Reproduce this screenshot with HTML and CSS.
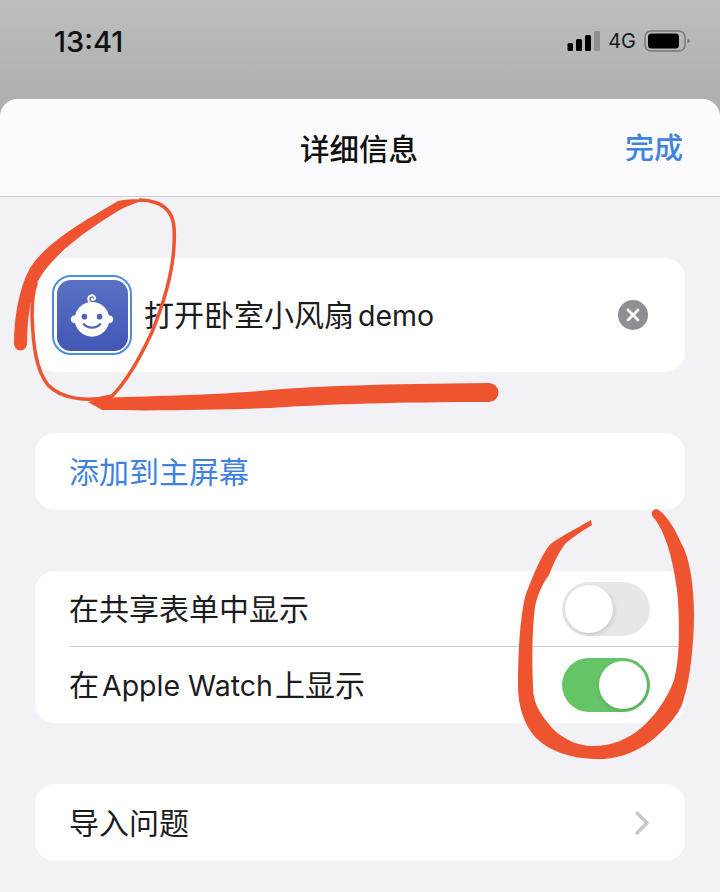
FILE: index.html
```html
<!DOCTYPE html>
<html lang="zh-CN">
<head>
  <meta charset="UTF-8" />
  <title>详细信息</title>
  <link rel="stylesheet" href="styles.css">
</head>
<body>
  <!-- Status bar -->
  <div class="status-bar">
    <span class="time">13:41</span>
    <div class="status-icons">
      <svg class="signal" width="33" height="20" viewBox="0 0 33 20">
        <rect x="0.500" y="12" width="5.500" height="8" rx="1.500" fill="#000"/>
        <rect x="9" y="8" width="6" height="12" rx="1.500" fill="#000"/>
        <rect x="18" y="4" width="6" height="16" rx="1.500" fill="#000"/>
        <rect x="27" y="0" width="6" height="20" rx="1" fill="#8f9092"/>
      </svg>
      <span class="network">4G</span>
      <svg class="battery" width="47" height="22" viewBox="0 0 47 22">
        <rect x="1" y="1" width="40" height="20" rx="6" fill="none" stroke="#77787a" stroke-width="1.500"/>
        <rect x="4" y="3.500" width="31" height="15" rx="3.500" fill="#000"/>
        <path d="M43.500 8.500l2.500 2.500-2.500 2.500z" fill="#66676a"/>
      </svg>
    </div>
  </div>

  <div class="sheet">
    <div class="sheet-header">
      <span class="sheet-title">详细信息</span>
      <span class="done">完成</span>
    </div>

    <div class="sheet-body">
      <!-- Name -->
      <div class="card name-card">
        <div class="app-icon">
          <div class="app-icon-inner">
            <svg width="52" height="52" viewBox="0 0 48 48">
              <circle cx="24" cy="28" r="16" fill="#fff"/>
              <circle cx="8" cy="28" r="3.500" fill="#fff"/>
              <circle cx="40" cy="28" r="3.500" fill="#fff"/>
              <path d="M23 13c-3-1.500-3.500-6 0-7 3-.8 5 2.500 2.800 4-1.200.7-2.400-.3-1.800-1.300" fill="none" stroke="#fff" stroke-width="1.800" stroke-linecap="round"/>
              <circle cx="17" cy="25.500" r="2.600" fill="#4f64bc"/>
              <circle cx="31" cy="25.500" r="2.600" fill="#4f64bc"/>
              <path d="M16.500 32.500c4 4.200 11 4.200 15 0" fill="none" stroke="#4f64bc" stroke-width="2.200" stroke-linecap="round"/>
            </svg>
          </div>
        </div>
        <span class="name-text label">打开卧室小风扇<span class="latin">demo</span></span>
        <svg class="clear" width="30" height="30" viewBox="0 0 30 30">
          <circle cx="15" cy="15" r="15" fill="#8e8e93"/>
          <path d="M10 10l10 10M20 10l-10 10" stroke="#fff" stroke-width="2.800" stroke-linecap="round"/>
        </svg>
      </div>

      <!-- Home screen -->
      <div class="card row row-single">
        <span class="label link">添加到主屏幕</span>
      </div>

      <!-- Toggles -->
      <div class="card">
        <div class="row row-split">
          <span class="label">在共享表单中显示</span>
          <span class="toggle"><span class="knob"></span></span>
        </div>
        <div class="row">
          <span class="label">在<span class="latin">Apple Watch</span>上显示</span>
          <span class="toggle toggle-on"><span class="knob"></span></span>
        </div>
      </div>

      <!-- Import -->
      <div class="card row row-single">
        <span class="label">导入问题</span>
        <svg class="chevron" width="14" height="24" viewBox="0 0 14 24">
          <path d="M2 2l10 10L2 22" fill="none" stroke="#c7c7cc" stroke-width="3.500" stroke-linecap="round" stroke-linejoin="round"/>
        </svg>
      </div>
    </div>
  </div>

  <!-- Red pen marks drawn over the screenshot -->
  <svg class="scribbles" width="720" height="892" viewBox="0 0 720 892">
    <g fill="#ee5430">
      <path d="M14 344C14 320 18 290 30 268C48 240 90 218 118 201C128 199 135 199 145 200C135 203 125 207 118 211C90 228 50 255 36 285C30 300 27 320 27 344A6.500 6.500 0 0 1 14 344Z"/>
      <path d="M88 402L100 398C150 396 220 395 270 390C320 386 380 384 489 383A9.500 9.500 0 0 1 489 402C400 402 330 404 270 408C220 410 150 411 102 410Z"/>
      <path d="M591 520C575 529 562 536 552 543C544 549 533 575 525 597C520 620 518 650 518 687C518 705 524 726 536 738C549 751 570 758 593 759C610 760 631 756 651 741C666 729 681 713 684 698C691 676 694 640 694 613C694 585 689 555 681 543C676 530 666 514 657 509C651 509 651 515 653 517C662 527 672 550 677 590C680 620 680 660 674 680C667 700 653 718 641 728C628 739 612 746 593 746C576 746 562 738 552 728C542 716 533 705 533 687C532 660 532 630 535 607C538 592 544 582 549 575C554 562 560 550 566 543C573 537 582 531 592 525Z"/>
    </g>
    <path d="M140 200C150 200 162 203 168 211C174 218 175 228 174 245C173 270 165 300 152 332C140 358 126 382 112 396C90 402 62 400 48 385C36 370 33 345 32 315C32 302 33 292 36 284" fill="none" stroke="#ee5430" stroke-width="3.500" stroke-linecap="round"/>
  </svg>
</body>
</html>
```

FILE: styles.css
```css
:root {
  --page-bg: #f1f1f6;
  --ios-blue: #3f82e0;
  --text-color: #1c1c1e;
  --card-radius: 20px;
  --ui-font: Inter, "Noto Sans CJK SC", sans-serif;
}

html, body {
  height: 100%;
}

body {
  margin: 0;
  height: 892px;
  overflow: hidden;
  position: relative;
  font-family: var(--ui-font);
  color: var(--text-color);
  background: linear-gradient(#bdbec0, #aeafaf 99px);
}

.status-bar {
  height: 99px;
  box-sizing: border-box;
  padding: 25px 29px 0 54px;
  display: flex;
  justify-content: space-between;
  align-items: flex-start;
}

.time {
  font-size: 29px;
  line-height: 34px;
  font-weight: 500;
  color: #111;
}

.status-icons {
  display: flex;
  align-items: center;
  height: 34px;
  margin-top: -1px;
}

.signal {
  margin-right: 8px;
}

.network {
  font-size: 20px;
  color: #1a1a1a;
  margin-right: 8px;
}

.sheet {
  height: 793px;
  background: var(--page-bg);
  border-radius: 18px 18px 0 0;
  overflow: hidden;
}

.sheet-header {
  height: 97px;
  background: #fbfbfd;
  border-bottom: 1px solid #cfcfd3;
  display: flex;
  align-items: center;
  justify-content: center;
  position: relative;
}

.sheet-title {
  font-size: 29.500px;
  font-weight: 500;
  color: #111;
  padding: 0 2px 2px 0;
}

.done {
  position: absolute;
  right: 37px;
  top: 30px;
  font-size: 29px;
  line-height: 40px;
  font-weight: 500;
  color: var(--ios-blue);
}

.sheet-body {
  padding: 61px 35px 0;
  display: flex;
  flex-direction: column;
  gap: 61px;
}

.card {
  background: #fff;
  border-radius: var(--card-radius);
}

.row {
  height: 76px;
  box-sizing: border-box;
  padding: 0 35px 0 34px;
  display: flex;
  align-items: center;
  justify-content: space-between;
  font-size: 30px;
}

.row-single {
  height: 77px;
}

.row-split {
  position: relative;
}

.row-split::after {
  content: "";
  position: absolute;
  left: 35px;
  right: 0;
  bottom: 0;
  height: 1px;
  background: #cdcdd0;
}

.label {
  padding-bottom: 4px;
}

.latin {
  font-size: 28.500px;
  margin: 0 2px 0 3px;
}

.link {
  color: var(--ios-blue);
}

.name-card {
  height: 114px;
  box-sizing: border-box;
  padding: 0 37px 0 17px;
  display: flex;
  align-items: center;
}

.app-icon {
  width: 80px;
  height: 80px;
  box-sizing: border-box;
  border: 2.500px solid #4a8ee0;
  border-radius: 19px;
  padding: 2.500px;
  flex-shrink: 0;
}

.app-icon-inner {
  height: 100%;
  border-radius: 14px;
  background: linear-gradient(#5a70c4, #4257b5);
  display: flex;
  align-items: center;
  justify-content: center;
}

.name-text {
  margin-left: 12px;
  font-size: 30px;
  flex: 1;
}

.name-text .latin {
  margin: 0 0 0 4px;
}

.toggle {
  width: 88px;
  height: 54px;
  box-sizing: border-box;
  padding: 3px;
  border-radius: 27px;
  background: #e7e7e9;
  display: flex;
}

.knob {
  width: 48px;
  height: 48px;
  border-radius: 50%;
  background: #fff;
  box-shadow: 1px 2px 5px rgba(0, 0, 0, 0.14);
}

.toggle-on {
  background: #64c466;
  justify-content: flex-end;
}

.chevron {
  margin-right: 1px;
}

.scribbles {
  position: absolute;
  left: 0;
  top: 0;
  pointer-events: none;
}
```
